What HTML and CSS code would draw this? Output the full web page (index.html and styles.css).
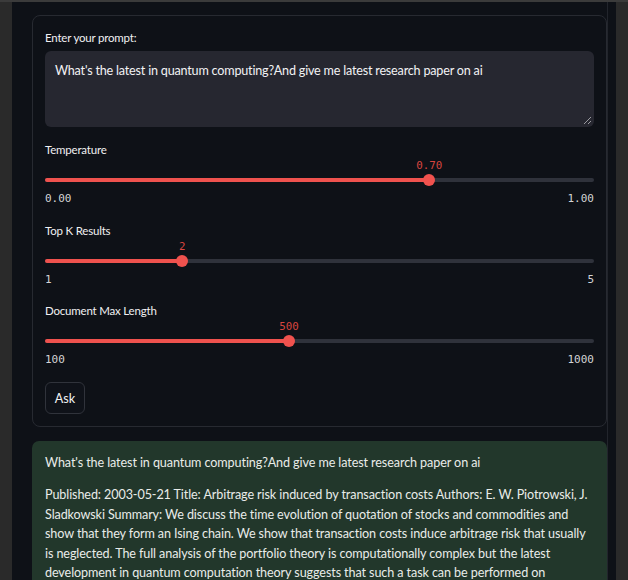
FILE: index.html
```html
<!DOCTYPE html>
<html>
<head>
<meta charset="utf-8">
<link rel="stylesheet" href="styles.css">
</head>
<body>
<div class="topline"></div>
<div class="shell">
  <main class="app">
    <section class="form">
      <div class="label">Enter your prompt:</div>
      <div class="textarea">What's the latest in quantum computing?And give me latest research paper on ai<span class="grip"></span></div>

      <div class="slider">
        <div class="label">Temperature</div>
        <div class="value-row"><span class="value" style="left:70%">0.70</span></div>
        <div class="track"><div class="fill" style="width:70%"></div><span class="thumb" style="left:70%"></span></div>
        <div class="ticks"><span>0.00</span><span>1.00</span></div>
      </div>

      <div class="slider">
        <div class="label">Top K Results</div>
        <div class="value-row"><span class="value" style="left:25%">2</span></div>
        <div class="track"><div class="fill" style="width:25%"></div><span class="thumb" style="left:25%"></span></div>
        <div class="ticks"><span>1</span><span>5</span></div>
      </div>

      <div class="slider">
        <div class="label">Document Max Length</div>
        <div class="value-row"><span class="value" style="left:44.44%">500</span></div>
        <div class="track"><div class="fill" style="width:44.44%"></div><span class="thumb" style="left:44.44%"></span></div>
        <div class="ticks"><span>100</span><span>1000</span></div>
      </div>

      <button class="ask">Ask</button>
    </section>

    <section class="result">
      <p>What's the latest in quantum computing?And give me latest research paper on ai</p>
      <p>Published: 2003-05-21 Title: Arbitrage risk induced by transaction costs Authors: E. W. Piotrowski, J. Sladkowski Summary: We discuss the time evolution of quotation of stocks and commodities and show that they form an Ising chain. We show that transaction costs induce arbitrage risk that usually is neglected. The full analysis of the portfolio theory is computationally complex but the latest development in quantum computation theory suggests that such a task can be performed on quantum computers.</p>
    </section>
  </main>
  <div class="scrollbar"></div>
</div>
</body>
</html>
```

FILE: styles.css
```css
html, body {
  margin: 0;
  padding: 0;
  background: #2a2a2a;
  height: 580px;
  overflow: hidden;
}

body {
  font-family: Lato, "Noto Sans", sans-serif;
  color: #e8e8ea;
}

.topline {
  height: 2px;
  background: #3b3b3b;
}

.shell {
  display: flex;
  margin-left: 12px;
  width: 604px;
  background: #0e1117;
  height: 578px;
}

.app {
  flex: 1;
  padding: 13px 0 0 20px;
  min-width: 0;
}

.scrollbar {
  width: 9px;
  border-left: 1px solid #22252c;
  box-sizing: border-box;
}

.form {
  border: 1px solid #272a31;
  border-radius: 8px;
  padding: 13px 12px 12px 12px;
  width: 575px;
  box-sizing: border-box;
}

.label {
  font-size: 11.5px;
  line-height: 18px;
  color: #f0f0f2;
  letter-spacing: -0.2px;
}

.textarea {
  position: relative;
  margin-top: 4px;
  height: 76px;
  box-sizing: border-box;
  background: #262730;
  border-radius: 6px;
  padding: 10px 10px;
  font-size: 12.6px;
  line-height: 20px;
  color: #f2f2f4;
  letter-spacing: -0.2px;
}

.grip {
  position: absolute;
  right: 3px;
  bottom: 3px;
  width: 7px;
  height: 7px;
  background: linear-gradient(135deg, transparent 45%, #9a9aa0 45%, #9a9aa0 55%, transparent 55%, transparent 75%, #9a9aa0 75%, #9a9aa0 85%, transparent 85%);
}

.slider {
  margin-top: 14px;
}

.slider + .slider {
  margin-top: 13.5px;
}

.value-row {
  position: relative;
  height: 14px;
}

.value {
  position: absolute;
  top: 0;
  transform: translateX(-50%);
  font-family: "DejaVu Sans Mono", "Liberation Mono", monospace;
  font-size: 10.8px;
  line-height: 14px;
  color: #d8453f;
}

.track {
  position: relative;
  height: 14px;
  display: flex;
  align-items: center;
}

.track::before {
  content: "";
  position: absolute;
  left: 0;
  right: 0;
  top: 5px;
  height: 4px;
  border-radius: 2px;
  background: #2f323b;
}

.fill {
  position: relative;
  height: 4px;
  border-radius: 2px;
  background: #ef524e;
}

.thumb {
  position: absolute;
  top: 1px;
  width: 12px;
  height: 12px;
  margin-left: -6px;
  border-radius: 50%;
  background: #f0524e;
}

.ticks {
  display: flex;
  justify-content: space-between;
  margin-top: 3px;
  font-family: "DejaVu Sans Mono", "Liberation Mono", monospace;
  font-size: 11px;
  line-height: 18px;
  color: #d4d4d6;
}

.ask {
  display: block;
  margin-top: 13px;
  width: 40px;
  height: 32px;
  padding: 0;
  border: 1px solid #30333b;
  border-radius: 6px;
  background: #0f1219;
  color: #f2f2f4;
  font-family: Lato, "Noto Sans", sans-serif;
  font-size: 12.6px;
}

.result {
  margin-top: 14px;
  width: 575px;
  box-sizing: border-box;
  background: #22372b;
  border-radius: 7px;
  padding: 12px 13px 12px 13px;
}

.result p {
  margin: 0 0 12.5px 0;
  font-size: 12.6px;
  line-height: 19.6px;
  color: #e9ece9;
  letter-spacing: -0.1px;
}
```
